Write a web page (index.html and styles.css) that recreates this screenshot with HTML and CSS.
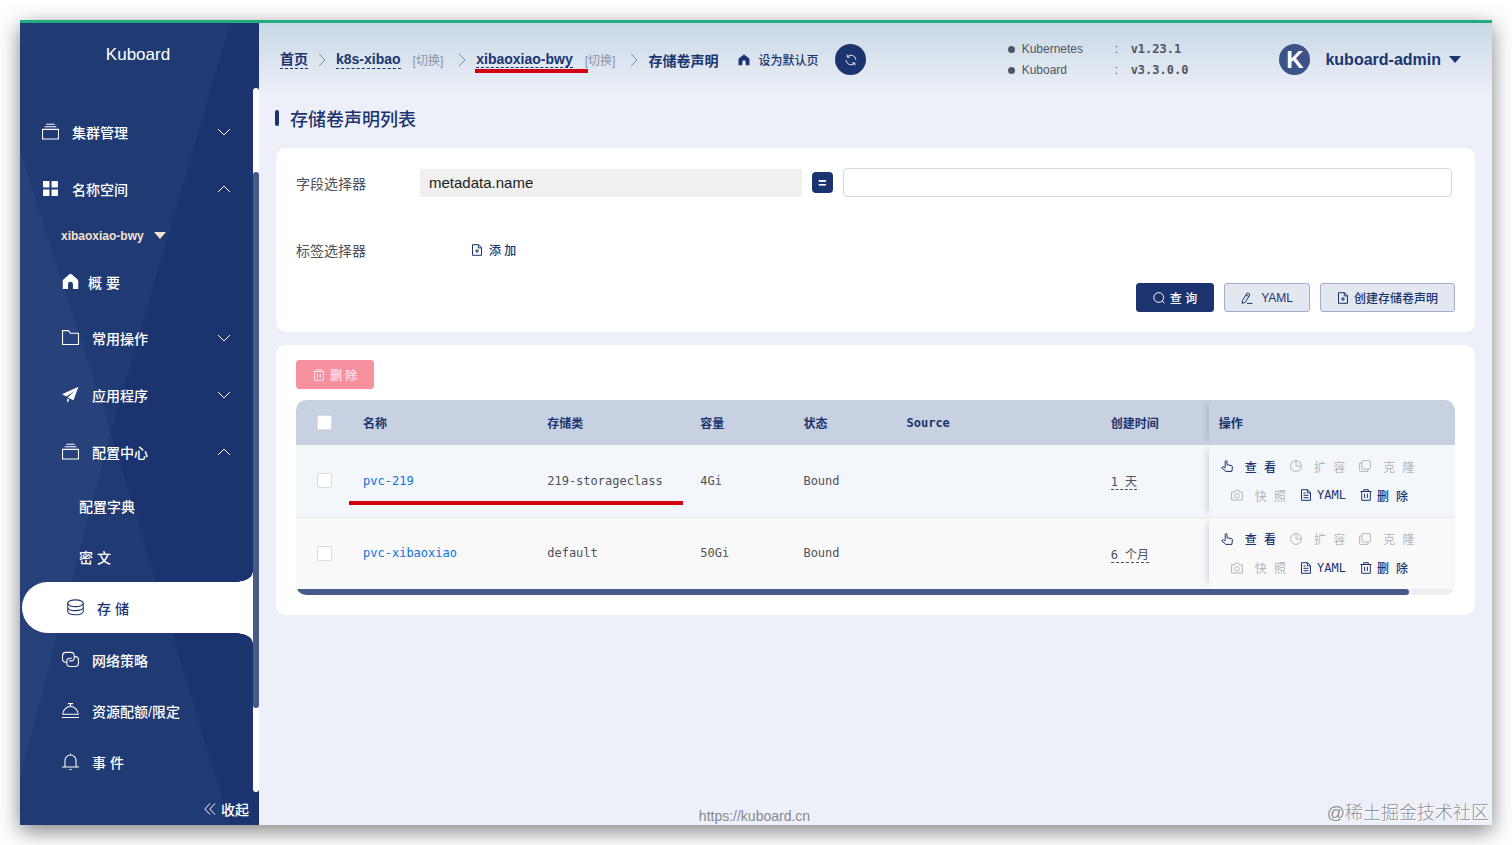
FILE: index.html
```
<!DOCTYPE html>
<html lang="zh-CN">
<head>
<meta charset="utf-8">
<title>Kuboard</title>
<link rel="stylesheet" href="styles.css">
</head>
<body>

<!-- icons -->
<svg class="sprite" aria-hidden="true">
	<symbol id="i-box" viewBox="0 0 16 16"><path d="M.5 6h15v9H.5zM2.5 3.5h11M4 1.2h8"/></symbol>
	<symbol id="i-grid" viewBox="0 0 16 16"><path class="solid" d="M1 1h6v6H1zM9 1h6v6H9zM1 9h6v6H1zM9 9h6v6H9z"/></symbol>
	<symbol id="i-home" viewBox="0 0 16 16"><path class="solid" d="M8 .8Q8.500.8 9 1.200l5.500 4.600q.8.7.8 1.700V15h-5v-4.500a2.300 2.300 0 0 0-4.600 0V15h-5V7.500q0-1 .8-1.700L7 1.200Q7.500.8 8 .8z"/></symbol>
	<symbol id="i-folder" viewBox="0 0 16 16"><path d="M.5 14.500v-13h5.500l2 2.500h7.500v10.500z"/></symbol>
	<symbol id="i-send" viewBox="0 0 16 16"><path class="solid" d="M15.500.8 0 7.800l4.200 2L12 4.500 5.300 10.800 10.800 13.500zM4.800 11.700v4l2.200-2.800z"/></symbol>
	<symbol id="i-coin" viewBox="0 0 16 16"><ellipse cx="8" cy="4" rx="7.300" ry="3.200"/><path d="M.7 4v7.500c0 4.500 14.600 4.500 14.600 0V4M.7 7.700c0 4.300 14.600 4.300 14.600 0"/></symbol>
	<symbol id="i-link" viewBox="0 0 16 16"><path d="M4.500 10.500H3.700A3.200 3.200 0 0 1 .5 7.300V4.500a3.200 3.200 0 0 1 3.200-3.200h4.600a3.200 3.200 0 0 1 3.200 3.200v1.800a3 3 0 0 1-3 3H6.800M11.800 5.300h.5a3.200 3.200 0 0 1 3.200 3.200v2.800a3.200 3.200 0 0 1-3.200 3.200H7.700a3.200 3.200 0 0 1-3.200-3.200V9.800a3 3 0 0 1 3-3h1.800"/></symbol>
	<symbol id="i-dish" viewBox="0 0 16 16"><path d="M.8 11.500a7.200 7.200 0 0 1 14.400 0zM0 14.500h16M8 4V1.500M5.500 1.500h5"/></symbol>
	<symbol id="i-bell" viewBox="0 0 16 16"><path d="M2.800 13V7a5.200 5.200 0 0 1 10.400 0v6M0 13.200h16M8 1.800V.5M7 15.500h2"/></symbol>
	<symbol id="i-down" viewBox="0 0 14 14"><path d="M1 4l6 6 6-6"/></symbol>
	<symbol id="i-up" viewBox="0 0 14 14"><path d="M1 10l6-6 6 6"/></symbol>
	<symbol id="i-right" viewBox="0 0 8 14"><path d="M1 1l6 6-6 6"/></symbol>
	<symbol id="i-fold" viewBox="0 0 12 12"><path d="M6 .5.8 6 6 11.500M11 .5 5.800 6 11 11.500"/></symbol>
	<symbol id="i-refresh" viewBox="0 0 14 14"><path d="M12.800 7A5.800 5.800 0 0 0 2.800 3.200M2.600.6v3h3.200M1.200 7a5.800 5.800 0 0 0 10 3.800M11.400 13.400v-3H8.200"/></symbol>
	<symbol id="i-docadd" viewBox="0 0 12 12"><path d="M1.500.7h6l3 3v7.600h-9zM7.300.7v3.200h3.200M6 5v4M4 7h4"/></symbol>
	<symbol id="i-doc" viewBox="0 0 12 12"><path d="M1.500.7h6l3 3v7.600h-9zM7.300.7v3.200h3.200M3.500 4h2M3.500 6.300h5M3.500 8.700h5"/></symbol>
	<symbol id="i-search" viewBox="0 0 12 12"><circle cx="5.700" cy="5.500" r="4.900"/><path d="M9.200 9l2.300 2.300"/></symbol>
	<symbol id="i-edit" viewBox="0 0 12 12"><path d="M6.300.9 9 2.500 4.300 10.300 1.200 11.300 1.500 8.500zM5 2.900l2.800 1.600M6 11.400h5.500"/></symbol>
	<symbol id="i-trash" viewBox="0 0 12 12"><path d="M.5 2.500h11M3.700 2.500V.7h4.600v1.800M1.700 2.500v8.800h8.600V2.500M4.600 4.700v4.300M7.400 4.700v4.300"/></symbol>
	<symbol id="i-hand" viewBox="0 0 12 12"><path d="M4.200 7.500V1.500q0-.9.9-.9t.9.900V4.700l4.300.9q1.200.3 1.100 1.500l-.5 4.300H4.800L.8 7.800q.2-1.300 1.700-.9l1.700 1.300"/></symbol>
	<symbol id="i-pie" viewBox="0 0 12 12"><circle cx="6" cy="6" r="5.400"/><path d="M6 .6V6h5.400"/></symbol>
	<symbol id="i-copy" viewBox="0 0 12 12"><rect x="3" y=".6" width="8.400" height="8.400" rx="1"/><path d="M3 3H.6v7.400q0 1 1 1H9V9"/></symbol>
	<symbol id="i-camera" viewBox="0 0 12 12"><path d="M.6 3h2.900l.8-1.800h3.400L8.500 3h2.900v8H.6z"/><circle cx="6" cy="6.800" r="2.300"/></symbol>
</svg>

<div class="window">

	<aside class="sidebar">
		<div class="logo">Kuboard</div>
		<div class="scroll">
			<nav class="menu">
				<button class="group"><svg class="icon"><use href="#i-box"/></svg>集群管理<svg class="arrow"><use href="#i-down"/></svg></button>
				<button class="group"><svg class="icon"><use href="#i-grid"/></svg>名称空间<svg class="arrow"><use href="#i-up"/></svg></button>
				<button class="namespace">xibaoxiao-bwy<span class="caret"></span></button>
				<a class="item overview" href="#"><svg class="icon"><use href="#i-home"/></svg>概 要</a>
				<button class="group sub"><svg class="icon"><use href="#i-folder"/></svg>常用操作<svg class="arrow"><use href="#i-down"/></svg></button>
				<button class="group sub"><svg class="icon"><use href="#i-send"/></svg>应用程序<svg class="arrow"><use href="#i-down"/></svg></button>
				<button class="group sub"><svg class="icon"><use href="#i-box"/></svg>配置中心<svg class="arrow"><use href="#i-up"/></svg></button>
				<a class="item leaf" href="#">配置字典</a>
				<a class="item leaf" href="#">密 文</a>
				<a class="item active" href="#"><svg class="icon"><use href="#i-coin"/></svg>存 储</a>
				<a class="item" href="#"><svg class="icon"><use href="#i-link"/></svg>网络策略</a>
				<a class="item" href="#"><svg class="icon"><use href="#i-dish"/></svg>资源配额/限定</a>
				<a class="item" href="#"><svg class="icon"><use href="#i-bell"/></svg>事 件</a>
			</nav>
			<div class="track"><div class="thumb"></div></div>
		</div>
		<button class="collapse"><svg><use href="#i-fold"/></svg>收起</button>
	</aside>

	<main class="main">
		<header class="header">
			<nav class="crumbs">
				<a class="crumb" href="#">首页</a>
				<svg class="sep"><use href="#i-right"/></svg>
				<a class="crumb" href="#">k8s-xibao</a>
				<a class="switch" href="#">[切换]</a>
				<svg class="sep"><use href="#i-right"/></svg>
				<span class="marked"><a class="crumb" href="#">xibaoxiao-bwy</a></span>
				<a class="switch" href="#">[切换]</a>
				<svg class="sep"><use href="#i-right"/></svg>
				<span class="current">存储卷声明</span>
			</nav>
			<button class="default-page"><svg><use href="#i-home"/></svg>设为默认页</button>
			<button class="refresh" aria-label="刷新"><svg><use href="#i-refresh"/></svg></button>
			<ul class="versions">
				<li><span class="name">Kubernetes</span><span class="colon">:</span><b>v1.23.1</b></li>
				<li><span class="name">Kuboard</span><span class="colon">:</span><b>v3.3.0.0</b></li>
			</ul>
			<button class="user"><span class="avatar">K</span>kuboard-admin<span class="caret"></span></button>
		</header>

		<h1 class="title">存储卷声明列表</h1>

		<form class="card filter">
			<div class="row">
				<label for="field">字段选择器</label>
				<select id="field" class="field"><option>metadata.name</option></select>
				<button type="button" class="equal">=</button>
				<input class="value" type="text" aria-label="字段值">
			</div>
			<div class="row">
				<span class="label">标签选择器</span>
				<button type="button" class="add"><svg><use href="#i-docadd"/></svg>添 加</button>
			</div>
			<div class="actions">
				<button type="button" class="btn primary"><svg><use href="#i-search"/></svg>查 询</button>
				<button type="button" class="btn yaml"><svg><use href="#i-edit"/></svg>YAML</button>
				<button type="button" class="btn"><svg><use href="#i-docadd"/></svg>创建存储卷声明</button>
			</div>
		</form>

		<section class="card list">
			<button class="btn danger" disabled><svg><use href="#i-trash"/></svg>删 除</button>
			<div class="table-box">
				<table class="table">
					<colgroup>
						<col class="c-check"><col class="c-name"><col class="c-class"><col class="c-size"><col class="c-state"><col class="c-source"><col class="c-time"><col class="c-ops">
					</colgroup>
					<thead>
						<tr>
							<th class="check"><input type="checkbox" aria-label="全选"></th>
							<th>名称</th>
							<th>存储类</th>
							<th>容量</th>
							<th>状态</th>
							<th>Source</th>
							<th>创建时间</th>
							<th class="ops">操作</th>
						</tr>
					</thead>
					<tbody>
						<tr>
							<td class="check"><input type="checkbox" aria-label="pvc-219"></td>
							<td class="underlined"><a href="#">pvc-219</a></td>
							<td>219-storageclass</td>
							<td>4Gi</td>
							<td>Bound</td>
							<td></td>
							<td><span class="age">1 天</span></td>
							<td class="ops">
								<div class="op-line">
									<button class="op"><svg><use href="#i-hand"/></svg>查 看</button>
									<button class="op" disabled><svg><use href="#i-pie"/></svg>扩 容</button>
									<button class="op" disabled><svg><use href="#i-copy"/></svg>克 隆</button>
								</div>
								<div class="op-line second">
									<button class="op" disabled><svg><use href="#i-camera"/></svg>快 照</button>
									<button class="op tight"><svg><use href="#i-doc"/></svg>YAML</button>
									<button class="op tight"><svg><use href="#i-trash"/></svg>删 除</button>
								</div>
							</td>
						</tr>
						<tr>
							<td class="check"><input type="checkbox" aria-label="pvc-xibaoxiao"></td>
							<td><a href="#">pvc-xibaoxiao</a></td>
							<td>default</td>
							<td>50Gi</td>
							<td>Bound</td>
							<td></td>
							<td><span class="age">6 个月</span></td>
							<td class="ops">
								<div class="op-line">
									<button class="op"><svg><use href="#i-hand"/></svg>查 看</button>
									<button class="op" disabled><svg><use href="#i-pie"/></svg>扩 容</button>
									<button class="op" disabled><svg><use href="#i-copy"/></svg>克 隆</button>
								</div>
								<div class="op-line second">
									<button class="op" disabled><svg><use href="#i-camera"/></svg>快 照</button>
									<button class="op tight"><svg><use href="#i-doc"/></svg>YAML</button>
									<button class="op tight"><svg><use href="#i-trash"/></svg>删 除</button>
								</div>
							</td>
						</tr>
					</tbody>
				</table>
				<div class="hscroll"><div class="hthumb"></div></div>
			</div>
		</section>

		<footer class="footer"><a href="#">https://kuboard.cn</a></footer>
	</main>

	<div class="watermark">@稀土掘金技术社区</div>
</div>

</body>
</html>
```

FILE: styles.css
```
* {
	box-sizing: border-box;
}
body {
	margin: 0;
	padding: 20px;
	background: #fff;
	color: #4f5259;
	font-family: "Liberation Sans", "Noto Sans CJK SC", sans-serif;
	font-size: 14px;
}
a {
	color: inherit;
	text-decoration: none;
}
button, input, select {
	margin: 0;
	padding: 0;
	border: 0;
	background: none;
	color: inherit;
	font: inherit;
}
svg {
	flex: none;
	width: 12px;
	height: 12px;
	fill: none;
	stroke: currentColor;
	stroke-width: 1;
}
.solid {
	fill: currentColor;
	stroke: none;
}
.sprite {
	position: absolute;
	width: 0;
	height: 0;
}
.caret {
	border: 6px solid transparent;
	border-top: 7px solid currentColor;
	border-bottom: 0;
}

.window {
	position: relative;
	display: flex;
	min-height: calc(100vh - 40px);
	border-top: 3px solid #22ab7c;
	background: #edf0f8;
	box-shadow: 0 6px 20px rgba(0, 0, 0, 0.5);
}

/* sidebar */
.sidebar {
	position: relative;
	z-index: 0;
	display: flex;
	flex-direction: column;
	flex: none;
	width: 239px;
	background: #203a73;
	color: #fff;
}
.sidebar::before, .sidebar::after {
	content: "";
	position: absolute;
	z-index: -1;
	top: 0;
	right: 0;
	bottom: 0;
	left: 0;
}
.sidebar::before {
	background: #27427b;
	clip-path: polygon(0 16%, 38% 51%, 0 94%);
}
.sidebar::after {
	background: #1b346f;
	clip-path: polygon(88% 0, 38% 51%, 88% 100%, 100% 100%, 100% 0);
}
.logo {
	height: 65px;
	line-height: 63px;
	padding-right: 3px;
	text-align: center;
	font-size: 17px;
}
.scroll {
	display: flex;
	flex: 1;
}
.menu {
	flex: 1;
	padding-top: 15px;
}
.track {
	position: relative;
	width: 6px;
	border-radius: 3px;
	background: #fff;
}
.thumb {
	position: absolute;
	top: 12%;
	width: 6px;
	height: 76%;
	border-radius: 3px;
	background: #465b88;
}
.group, .item, .namespace {
	display: flex;
	align-items: center;
	gap: 13px;
	width: 100%;
	height: 51px;
	padding: 0 22px 0 42px;
	font-weight: 500;
}
.group {
	height: 57px;
	padding-left: 22px;
}
.group.sub {
	padding-left: 42px;
}
.icon {
	width: 17px;
	height: 17px;
}
.arrow {
	width: 14px;
	height: 14px;
	margin-left: auto;
}
.namespace {
	gap: 10px;
	height: 37px;
	padding-left: 41px;
	color: #f6e3cf;
	font-size: 12px;
	font-weight: bold;
}
.overview {
	height: 55px;
	gap: 9px;
}
.leaf {
	padding-left: 59px;
}
.item.active {
	position: relative;
	width: auto;
	margin: 0 0 1px 2px;
	padding-left: 45px;
	border-radius: 26px 0 0 26px;
	background: #fff;
	color: #1b346f;
}
/* inverted corners next to the scroll bar */
.active::before, .active::after {
	content: "";
	position: absolute;
	right: 0;
	width: 17px;
	height: 10px;
}
.active::before {
	bottom: 100%;
	background: radial-gradient(ellipse 17px 10px at 0 0, transparent 96%, #fff 100%);
}
.active::after {
	top: 100%;
	background: radial-gradient(ellipse 17px 10px at 0 100%, transparent 96%, #fff 100%);
}
.collapse {
	display: flex;
	align-items: center;
	align-self: flex-end;
	gap: 5px;
	height: 33px;
	padding-right: 10px;
	font-weight: 500;
}

/* header */
.main {
	display: flex;
	flex-direction: column;
	flex: 1;
	min-width: 0;
	padding: 0 17px;
}
.header {
	display: flex;
	align-items: center;
	height: 73px;
	margin: 0 -17px;
	padding: 0 31px 0 21px;
	background: linear-gradient(#c9d8e6, #edf0f8);
	color: #1b346f;
}
.crumbs {
	display: flex;
	align-items: center;
	gap: 10px;
	white-space: nowrap;
}
.crumb {
	border-bottom: 1px dashed #1b346f;
	font-weight: bold;
	line-height: 17px;
}
.switch {
	margin-left: 2px;
	color: #8b93a8;
	font-size: 12px;
}
.switch + .sep {
	margin-left: 5px;
}
.sep {
	width: 8px;
	height: 14px;
	color: #7f889c;
}
.marked {
	position: relative;
}
.marked::after {
	content: "";
	position: absolute;
	top: 18px;
	left: -1px;
	right: -15px;
	height: 4px;
	background: #d2000f;
}
.current {
	font-weight: bold;
}
.default-page {
	display: flex;
	align-items: center;
	gap: 8px;
	margin-left: 20px;
	font-size: 12px;
	font-weight: 500;
	white-space: nowrap;
}
.refresh {
	display: flex;
	align-items: center;
	justify-content: center;
	width: 31px;
	height: 31px;
	margin-left: 17px;
	border-radius: 50%;
	background: #1b346f;
	color: #fff;
}
.versions {
	margin: 0 91px 0 auto;
	padding: 0;
	list-style: none;
	color: #4f5663;
	font-size: 12px;
}
.versions li {
	display: flex;
	align-items: center;
	height: 21px;
}
.versions li::before {
	content: "";
	width: 7px;
	height: 7px;
	margin-right: 7px;
	border-radius: 50%;
	background: #4f5663;
}
.name {
	width: 93px;
}
.colon {
	width: 16px;
}
.versions b {
	font-family: "DejaVu Sans Mono", monospace;
}
.user {
	display: flex;
	align-items: center;
	font-size: 16px;
	font-weight: bold;
	white-space: nowrap;
}
.user .caret {
	margin-left: 8px;
}
.avatar {
	width: 31px;
	height: 31px;
	margin-right: 15px;
	border-radius: 50%;
	background: #3c5388;
	color: #fff;
	font-size: 24px;
	line-height: 31px;
}
.title {
	display: flex;
	align-items: center;
	gap: 11px;
	height: 44px;
	margin: 0 -1px 8px;
	color: #1b346f;
	font-size: 18px;
	font-weight: 500;
}
.title::before {
	content: "";
	width: 4px;
	height: 16px;
	border-radius: 2px;
	background: #1b346f;
}

/* cards */
.card {
	margin-bottom: 13px;
	padding: 20px;
	border-radius: 10px;
	background: #fff;
}
.row {
	display: flex;
	align-items: center;
	height: 29px;
	margin-bottom: 38px;
}
.row label, .label {
	width: 124px;
}
.field {
	flex: 375;
	height: 28px;
	padding: 0 9px;
	appearance: none;
	background: #f0f0f0;
	color: #1c1c1c;
	font-size: 15px;
}
.equal {
	width: 21px;
	height: 21px;
	margin: 0 10px;
	border-radius: 4px;
	background: #1b346f;
	color: #fff;
	font-weight: bold;
}
.value {
	flex: 605;
	height: 29px;
	margin-right: 3px;
	padding: 0 10px;
	border: 1px solid #d7d9df;
	border-radius: 4px;
}
.add {
	display: flex;
	align-items: center;
	gap: 6px;
	margin-left: 51px;
	color: #1b346f;
	font-size: 12px;
	font-weight: 500;
}
.actions {
	display: flex;
	justify-content: flex-end;
	gap: 10px;
	margin-top: -19px;
}
.btn {
	display: flex;
	align-items: center;
	gap: 5px;
	height: 29px;
	padding: 0 16px;
	border: 1px solid #a3aecb;
	border-radius: 3px;
	background: #e3e8f0;
	color: #1b346f;
	font-size: 12px;
	font-weight: 500;
}
.btn.primary {
	border-color: #1b346f;
	background: #1b346f;
	color: #fff;
}
.btn.yaml {
	gap: 8px;
}
.btn.danger {
	border-color: #f8919f;
	background: #f8919f;
	color: #fde4e7;
}

/* table */
.list {
	padding-top: 15px;
}
.table-box {
	margin-top: 11px;
	overflow: hidden;
	border-radius: 10px;
}
.table {
	width: 100%;
	table-layout: fixed;
	border-collapse: collapse;
	font-family: "DejaVu Sans Mono", "Noto Sans CJK SC", monospace;
	font-size: 12px;
}
.c-check {
	width: 57px;
}
.c-name {
	width: 184px;
}
.c-class {
	width: 153px;
}
.c-size, .c-state {
	width: 103px;
}
.c-source {
	width: 204px;
}
.c-time {
	width: 108px;
}
.c-ops {
	width: 246px;
}
.table th, .table td {
	height: 72px;
	padding: 0 10px;
	text-align: left;
}
.table th {
	height: 45px;
	background: #c8d1e1;
	color: #1b346f;
}
.table tbody tr {
	background: #f9f9f9;
}
.table tbody tr:first-child {
	border-bottom: 1px solid #e4e8ee;
	background: #f3f6fa;
}
.table td a {
	color: #0f6fe0;
}
.table .check {
	padding-left: 21px;
}
.check input {
	display: block;
	width: 15px;
	height: 15px;
	appearance: none;
	border: 1px solid #d9dce3;
	border-radius: 2px;
	background: #fff;
}
.underlined {
	position: relative;
}
.underlined::after {
	content: "";
	position: absolute;
	z-index: 1;
	top: 56px;
	left: -4px;
	width: 334px;
	height: 4px;
	background: #d2000f;
}
.age {
	border-bottom: 1px dashed #4f5259;
}
.table .ops {
	box-shadow: -7px 0 6px -5px rgba(40, 60, 100, 0.18);
}
.op-line {
	display: flex;
	gap: 14px;
	height: 29px;
	padding-left: 2px;
}
.op-line.second {
	padding-left: 12px;
}
.op {
	display: flex;
	align-items: center;
	gap: 12px;
	color: #1b346f;
	font-weight: 500;
	white-space: nowrap;
}
.op.tight {
	gap: 5px;
}
.op:disabled {
	color: #b4b6bb;
	font-weight: normal;
}
.hscroll {
	height: 6px;
	background: #eeeeee;
}
.hthumb {
	width: 96%;
	height: 6px;
	border-radius: 3px;
	background: #465b88;
}

.footer {
	margin-top: auto;
	padding: 0 242px 1px 0;
	text-align: center;
	color: #85888f;
}
.watermark {
	position: absolute;
	right: 3px;
	bottom: 1px;
	color: #8f9198;
	font-size: 18px;
	font-weight: 300;
	text-shadow: 1px 1px 0 #fff;
}
```
